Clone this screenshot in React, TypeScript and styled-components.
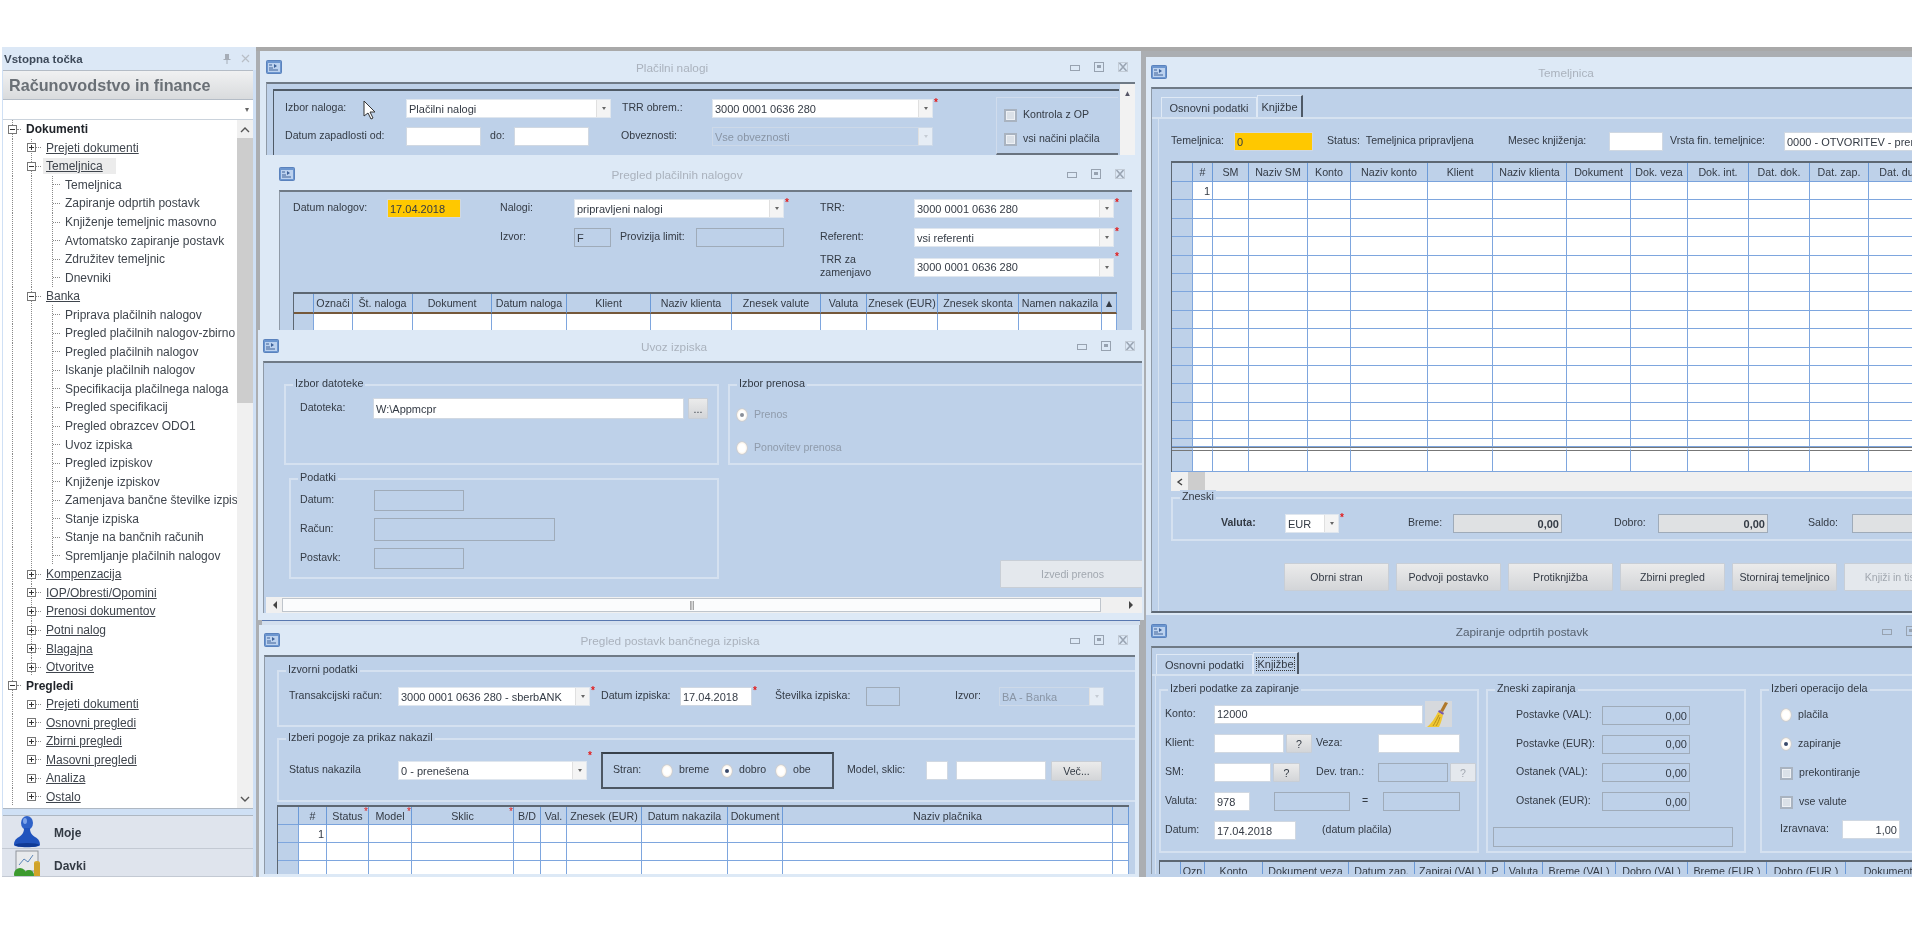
import React from 'react';
import styled, { createGlobalStyle } from 'styled-components';

const GlobalStyle = createGlobalStyle`
  html, body {
    margin: 0;
    padding: 0;
    background: #ffffff;
    overflow: hidden;
  }
  body {
    font-family: "Liberation Sans", Arial, sans-serif;
    font-size: 11px;
    color: #2a2f38;
  }
`;

const Page = styled.div`
  width: 1914px;
  height: 926px;
  padding: 47px 2px 0 2px;
  box-sizing: border-box;
  filter: blur(0.6px);
`;

const Screen = styled.div`
  display: flex;
  width: 1910px;
  height: 830px;
  overflow: hidden;
`;

/* ---------- left navigation ---------- */

const Nav = styled.aside`
  width: 254px;
  flex: none;
  display: flex;
  flex-direction: column;
  background: #cfe0f5;
  padding-right: 3px;
  box-sizing: border-box;
`;

const NavHead = styled.div`
  height: 23px;
  flex: none;
  display: flex;
  align-items: center;
  justify-content: space-between;
  padding: 0 6px 0 2px;
  background: #dce8f6;
  margin-right: -3px;
  font-size: 11.5px;
  font-weight: 700;
  color: #3e4a5a;
`;

const NavHeadIcons = styled.div`
  display: flex;
  align-items: center;
  gap: 10px;
`;

const NavTitle = styled.div`
  height: 28px;
  flex: none;
  display: flex;
  align-items: center;
  padding-left: 6px;
  font-size: 16.2px;
  font-weight: 700;
  color: #6a7076;
  background: linear-gradient(#f0f1f2, #d9dbdd);
  border-top: 1px solid #b4bcc6;
  border-bottom: 1px solid #b4bcc6;
  margin-left: 1px;
`;

const NavCombo = styled.div`
  height: 19px;
  flex: none;
  display: flex;
  justify-content: flex-end;
  align-items: center;
  background: #fff;
  margin-left: 1px;
  border-bottom: 1px solid #cbd3dc;
  padding-right: 4px;
  color: #666;
  font-size: 8px;
`;

const TreeBox = styled.div`
  flex: 1;
  display: flex;
  min-height: 0;
  background: #fff;
  margin-left: 1px;
`;

const Tree = styled.ul`
  flex: 1;
  list-style: none;
  margin: 0;
  padding: 0;
  min-width: 0;
  overflow: hidden;
`;

const dotted = 'repeating-linear-gradient(#8a8a8a 0 1px, transparent 1px 2px)';

const TreeRow = styled.li<{ $level: number; $sub?: boolean }>`
  height: 18.56px;
  display: flex;
  align-items: center;
  padding-left: ${(p) => (p.$level === 0 ? 5 : p.$level === 1 ? 24 : 50)}px;
  white-space: nowrap;
  font-size: 12px;
  color: #3a4048;
  background-image: ${dotted}, ${dotted}, ${dotted};
  background-repeat: no-repeat;
  background-size: 1px 100%;
  background-position:
    9px 0,
    ${(p) => (p.$sub ? '28px 0' : '-5px 0')},
    ${(p) => (p.$level === 2 ? '49px 0' : '-5px 0')};
`;

const TreeBoxIcon = styled.span`
  width: 9px;
  height: 9px;
  flex: none;
  border: 1px solid #777;
  box-sizing: border-box;
  position: relative;
  background: #fff;
  &::before {
    content: '';
    position: absolute;
    left: 1px;
    right: 1px;
    top: 3px;
    height: 1px;
    background: #333;
  }
`;

const TreePlus = styled(TreeBoxIcon)`
  &::after {
    content: '';
    position: absolute;
    left: 3px;
    top: 1px;
    bottom: 1px;
    width: 1px;
    background: #333;
  }
`;

const TreeDash = styled.span<{ $w: number }>`
  width: ${(p) => p.$w}px;
  flex: none;
  border-top: 1px dotted #888;
  margin-right: 2px;
`;

const TreeText = styled.span<{ $kind: 'root' | 'link' | 'leaf'; $active?: boolean }>`
  font-weight: ${(p) => (p.$kind === 'root' ? 700 : 400)};
  text-decoration: ${(p) => (p.$kind === 'link' ? 'underline' : 'none')};
  color: ${(p) => (p.$kind === 'root' ? '#20242a' : '#3f454d')};
  background: ${(p) => (p.$active ? '#ececec' : 'transparent')};
  padding: ${(p) => (p.$active ? '1px 13px 1px 3px' : '0 0 0 3px')};
`;

const TreeScroll = styled.div`
  width: 16px;
  flex: none;
  display: flex;
  flex-direction: column;
  align-items: center;
  background: #f0f0f0;
`;

const TreeThumb = styled.div`
  width: 16px;
  height: 265px;
  background: #cdcdcd;
`;

const TreeArrow = styled.div`
  height: 18px;
  flex: none;
  display: flex;
  align-items: center;
`;

const TreeGap = styled.div`
  flex: 1;
`;

const NavStrip = styled.div`
  height: 6px;
  flex: none;
  margin-left: 1px;
  background: #cfe0f5;
  border-top: 1px solid #aeb7c2;
  border-bottom: 1px solid #aeb7c2;
`;

const Shortcut = styled.div<{ $h: number }>`
  height: ${(p) => p.$h}px;
  flex: none;
  display: flex;
  align-items: flex-start;
  gap: 13px;
  padding-left: 11px;
  background: #dfe4ed;
  border-bottom: 1px solid #c3c9d3;
  font-size: 12px;
  font-weight: 700;
  line-height: 34px;
  color: #333a44;
  overflow: hidden;
`;

const ShortcutIcon = styled.svg`
  width: 28px;
  flex: none;
`;

/* ---------- MDI desktop ---------- */

const Desktop = styled.main`
  position: relative;
  flex: 1;
  background: #abaeb2;
  border-top: 4px solid #a9a9a9;
  box-sizing: border-box;
  overflow: hidden;
`;

const Window = styled.section<{
  $x: number;
  $y: number;
  $w: number;
  $h: number;
  $pl: number;
  $pr: number;
  $pb?: number;
  $focus?: boolean;
}>`
  position: absolute;
  left: ${(p) => p.$x}px;
  top: ${(p) => p.$y}px;
  width: ${(p) => p.$w}px;
  height: ${(p) => p.$h}px;
  display: flex;
  flex-direction: column;
  background: ${(p) => (p.$focus ? '#bed1e9' : '#dde9f6')};
  overflow: hidden;
  box-sizing: border-box;
  padding: 0 ${(p) => p.$pr}px ${(p) => p.$pb ?? 3}px ${(p) => p.$pl}px;
`;

const TitleBar = styled.header<{ $h: number; $cx: number; $focus?: boolean }>`
  height: ${(p) => p.$h}px;
  flex: none;
  display: flex;
  align-items: center;
  position: relative;
  color: ${(p) => (p.$focus ? '#55606e' : '#aab2bd')};
  font-size: 11.8px;
  h2 {
    position: absolute;
    left: ${(p) => p.$cx}px;
    transform: translateX(-50%);
    margin: 2px 0 0 0;
    font: inherit;
    white-space: nowrap;
  }
`;

const WinIcon = styled.svg`
  width: 16px;
  height: 14px;
  flex: none;
`;

const WinButtons = styled.div`
  margin-left: auto;
  margin-right: 7px;
  display: flex;
  align-items: center;
  gap: 14px;
`;

const WinBtn = styled.svg`
  width: 10px;
  height: 10px;
  flex: none;
`;

const Body = styled.div<{ $closed?: boolean }>`
  flex: 1;
  min-height: 0;
  background: #bed1e9;
  border-top: 2px solid #6f7a86;
  border-left: 1px solid #8f9aa7;
  border-bottom: ${(p) => (p.$closed ? '2px solid #5f6975' : '0')};
  overflow: hidden;
  position: relative;
  display: flex;
  flex-direction: column;
`;

const Stack = styled.div<{ $t?: number; $l?: number; $gap?: number }>`
  display: flex;
  flex-direction: column;
  gap: ${(p) => p.$gap ?? 0}px;
  padding-top: ${(p) => p.$t ?? 0}px;
  padding-left: ${(p) => p.$l ?? 0}px;
  flex: none;
`;

const Row = styled.div<{ $h?: number; $gap?: number; $mt?: number; $ml?: number; $top?: boolean }>`
  display: flex;
  align-items: ${(p) => (p.$top ? 'flex-start' : 'center')};
  height: ${(p) => (p.$h ? `${p.$h}px` : 'auto')};
  gap: ${(p) => p.$gap ?? 0}px;
  margin-top: ${(p) => p.$mt ?? 0}px;
  margin-left: ${(p) => p.$ml ?? 0}px;
  flex: none;
`;

const Label = styled.span<{ $w?: number; $ml?: number; $tone?: 'dis' | 'bold' }>`
  width: ${(p) => (p.$w ? `${p.$w}px` : 'auto')};
  margin-left: ${(p) => p.$ml ?? 0}px;
  padding-bottom: 2px;
  flex: none;
  white-space: nowrap;
  font-size: 10.6px;
  line-height: 13px;
  font-weight: ${(p) => (p.$tone === 'bold' ? 700 : 400)};
  color: ${(p) => (p.$tone === 'dis' ? '#8f9bab' : '#333a44')};
`;

const Field = styled.div<{
  $w: number;
  $h?: number;
  $ml?: number;
  $bg?: string;
  $right?: boolean;
  $bold?: boolean;
}>`
  width: ${(p) => p.$w}px;
  height: ${(p) => p.$h ?? 19}px;
  margin-left: ${(p) => p.$ml ?? 0}px;
  flex: none;
  box-sizing: border-box;
  display: flex;
  align-items: center;
  justify-content: ${(p) => (p.$right ? 'flex-end' : 'flex-start')};
  padding: 0 2px;
  background: ${(p) => p.$bg ?? '#ffffff'};
  border: 1px solid ${(p) => (p.$bg && p.$bg !== '#ffc800' ? '#9fabb9' : '#d0d8e2')};
  font-size: 11px;
  font-weight: ${(p) => (p.$bold ? 700 : 400)};
  color: #333a44;
  white-space: nowrap;
  overflow: hidden;
`;

const ComboBox = styled.div<{ $w: number; $ml?: number; $dis?: boolean }>`
  width: ${(p) => p.$w}px;
  height: 19px;
  margin-left: ${(p) => p.$ml ?? 0}px;
  flex: none;
  box-sizing: border-box;
  display: flex;
  align-items: center;
  justify-content: space-between;
  background: ${(p) => (p.$dis ? '#bed1e9' : '#ffffff')};
  border: 1px solid ${(p) => (p.$dis ? '#cdd9e8' : '#dfe6ee')};
  font-size: 11px;
  color: ${(p) => (p.$dis ? '#8995a5' : '#333a44')};
  padding-left: 2px;
  white-space: nowrap;
  overflow: hidden;
`;

const ComboArrow = styled.span<{ $dis?: boolean }>`
  width: 13px;
  height: 100%;
  flex: none;
  display: flex;
  align-items: center;
  justify-content: center;
  background: ${(p) => (p.$dis ? '#e6edf5' : '#f4f4f4')};
  border-left: 1px solid #e0e0e0;
  &::before {
    content: '';
    border-left: 2.5px solid transparent;
    border-right: 2.5px solid transparent;
    border-top: 3px solid ${(p) => (p.$dis ? '#c5ccd4' : '#666')};
  }
`;

const Star = styled.span`
  width: 4px;
  flex: none;
  align-self: flex-start;
  margin-left: 1px;
  color: #e21b1b;
  font-size: 10px;
  line-height: 8px;
  font-weight: 700;
`;

const GroupBox = styled.fieldset<{ $w: number; $h: number; $ml?: number; $mt?: number; $open?: boolean }>`
  width: ${(p) => p.$w}px;
  height: ${(p) => p.$h}px;
  margin: ${(p) => p.$mt ?? 0}px 0 0 ${(p) => p.$ml ?? 0}px;
  box-sizing: border-box;
  flex: none;
  padding: 0;
  border: 2px solid #d5e1f0;
  border-right-width: ${(p) => (p.$open ? 0 : 2)}px;
  position: relative;
  min-width: 0;
`;

const GroupLegend = styled.legend`
  position: absolute;
  top: -9px;
  left: 7px;
  padding: 0 2px;
  margin: 0;
  background: #bed1e9;
  font-size: 10.8px;
  line-height: 13px;
  color: #333a44;
  white-space: nowrap;
`;

const BtnBox = styled.div<{
  $w: number;
  $h?: number;
  $ml?: number;
  $mt?: number;
  $dis?: boolean;
}>`
  width: ${(p) => p.$w}px;
  height: ${(p) => p.$h ?? 19}px;
  margin: ${(p) => p.$mt ?? 0}px 0 0 ${(p) => p.$ml ?? 0}px;
  flex: none;
  box-sizing: border-box;
  display: flex;
  align-items: center;
  justify-content: center;
  background: ${(p) => (p.$dis ? '#e4e8ed' : 'linear-gradient(#ebebeb, #d3d5d8)')};
  border: 1px solid #c8ced6;
  border-radius: 1px;
  font-size: 10.6px;
  color: ${(p) => (p.$dis ? '#a2a8b0' : '#333a44')};
  white-space: nowrap;
  overflow: hidden;
`;

const Radio = styled.span<{ $on?: boolean; $ml?: number; $dis?: boolean }>`
  width: 12px;
  height: 14px;
  margin-left: ${(p) => p.$ml ?? 0}px;
  margin-right: 6px;
  flex: none;
  box-sizing: border-box;
  border-radius: 50%;
  background: radial-gradient(#ffffff 45%, #f8e3c6 100%);
  border: 1px solid #c9ced6;
  display: flex;
  align-items: center;
  justify-content: center;
  &::before {
    content: '';
    width: 4px;
    height: 4px;
    border-radius: 50%;
    background: ${(p) => (p.$on ? (p.$dis ? '#8a8f99' : '#3a4a6a') : 'transparent')};
  }
`;

const Check = styled.span`
  width: 13px;
  height: 13px;
  margin-right: 6px;
  flex: none;
  box-sizing: border-box;
  background: #dbe1e8;
  border: 2px solid #a9b3c0;
  box-shadow: inset 0 0 0 1px #eef1f5;
`;

const Side = styled.div<{ $w: number; $h: number; $ml: number; $mt: number }>`
  width: ${(p) => p.$w}px;
  height: ${(p) => p.$h}px;
  margin: ${(p) => p.$mt}px 0 0 ${(p) => p.$ml}px;
  flex: none;
  box-sizing: border-box;
  border-top: 1px solid #d0dced;
  border-left: 1px solid #d0dced;
  border-bottom: 2px solid #69737f;
  display: flex;
  flex-direction: column;
  padding: 10px 0 0 7px;
  gap: 9px;
`;

const RightScroll = styled.div`
  position: absolute;
  top: 0;
  right: 0;
  bottom: 0;
  width: 15px;
  background: #f2f2f2;
  display: flex;
  justify-content: center;
  padding-top: 5px;
  box-sizing: border-box;
  color: #556;
  font-size: 8px;
`;

const InnerFrame = styled.div<{ $ml: number; $mt: number; $mr: number }>`
  margin: ${(p) => p.$mt}px ${(p) => p.$mr}px 0 ${(p) => p.$ml}px;
  border-top: 2px solid #4f5a66;
  border-left: 1px solid #4f5a66;
  flex: 1;
  display: flex;
`;

const StranBox = styled.div`
  width: 233px;
  height: 37px;
  margin-left: 9px;
  flex: none;
  box-sizing: border-box;
  display: flex;
  align-items: center;
  padding-left: 10px;
  border: 2px solid #4d5763;
  border-top-color: #38414b;
`;

/* ---------- data grids ---------- */

const Table = styled.div<{ $cols: string; $rows: string; $w: number; $ml?: number; $mt?: number }>`
  display: grid;
  grid-template-columns: ${(p) => p.$cols};
  grid-template-rows: ${(p) => p.$rows};
  width: ${(p) => p.$w}px;
  margin: ${(p) => p.$mt ?? 0}px 0 0 ${(p) => p.$ml ?? 0}px;
  box-sizing: border-box;
  background: #fff;
  border-top: 2px solid #5d6772;
  border-left: 1px solid #5d6772;
  overflow: hidden;
  flex: none;
`;

const HeadCell = styled.div<{ $brown?: boolean }>`
  display: flex;
  align-items: center;
  justify-content: center;
  background: #bed1e9;
  border-right: 1px solid #6b9ad8;
  border-bottom: ${(p) => (p.$brown ? '2px solid #75583a' : '1px solid #7aa3dc')};
  font-size: 10.7px;
  color: #333a44;
  white-space: nowrap;
  overflow: hidden;
  position: relative;
  box-sizing: border-box;
`;

const HeadStar = styled.span`
  position: absolute;
  right: 0;
  top: 1px;
  color: #e21b1b;
  font-size: 10px;
  line-height: 8px;
`;

const DataCell = styled.div<{ $side?: boolean; $sep?: boolean }>`
  background: ${(p) => (p.$side ? '#bed1e9' : '#ffffff')};
  border-right: 1px solid #7ea6de;
  border-bottom: 1px solid #7ea6de;
  border-top: ${(p) => (p.$sep ? '4px double #777' : '0')};
  box-sizing: border-box;
  display: flex;
  align-items: center;
  justify-content: flex-end;
  padding-right: 2px;
  font-size: 11px;
  color: #333a44;
`;

const TabStrip = styled.div<{ $ml: number; $mt: number }>`
  display: flex;
  align-items: flex-end;
  height: 22px;
  margin: ${(p) => p.$mt}px 0 0 ${(p) => p.$ml}px;
  flex: none;
`;

const Tab = styled.div<{ $w: number; $active?: boolean; $focus?: boolean }>`
  width: ${(p) => p.$w}px;
  height: ${(p) => (p.$active ? 22 : 20)}px;
  box-sizing: border-box;
  display: flex;
  align-items: center;
  justify-content: center;
  border-top: 1px solid #dfe9f5;
  border-left: 1px solid #dfe9f5;
  border-right: ${(p) => (p.$active ? '2px solid #4e5966' : '1px solid #dfe9f5')};
  font-size: 11px;
  color: #333a44;
  span {
    outline: ${(p) => (p.$focus ? '1px dotted #3a3a3a' : 'none')};
  }
`;

const TabPage = styled.div<{ $edge: number }>`
  border-top: 2px solid #d6e2f0;
  flex: 1;
  min-height: 0;
  display: flex;
  flex-direction: column;
  position: relative;
  &::before {
    content: '';
    position: absolute;
    left: ${(p) => p.$edge}px;
    top: 0;
    bottom: 0;
    width: 1px;
    background: #d6e2f0;
  }
`;

const HScroll = styled.div<{ $w: number; $h: number; $ml: number; $mt?: number }>`
  width: ${(p) => p.$w}px;
  height: ${(p) => p.$h}px;
  margin: ${(p) => p.$mt ?? 0}px 0 0 ${(p) => p.$ml}px;
  flex: none;
  background: #f0f0f0;
  display: flex;
  align-items: center;
  color: #555;
`;

const Thumb = styled.div`
  width: 17px;
  height: 100%;
  margin-left: 4px;
  background: #cdcdcd;
`;

const ThumbBar = styled.div`
  width: 819px;
  height: 14px;
  margin-left: 3px;
  background: #fbfcfd;
  border: 1px solid #bfc5cc;
  box-sizing: border-box;
  display: flex;
  align-items: center;
  justify-content: center;
  color: #888;
  font-size: 9px;
  letter-spacing: -1px;
`;

const Caret = styled.svg<{ $ml: number }>`
  width: 8px;
  height: 8px;
  margin-left: ${(p) => p.$ml}px;
  flex: none;
`;

const Cursor = styled.svg`
  position: absolute;
  left: 96px;
  top: 16px;
  width: 14px;
  height: 20px;
  z-index: 2;
`;

const HiddenEdge = styled.div`
  position: absolute;
  left: 6px;
  top: 569px;
  width: 878px;
  height: 5px;
  background: #d3dfee;
  border-top: 1px solid #5878b0;
  box-sizing: border-box;
`;

const BroomIcon = styled.svg`
  width: 27px;
  height: 26px;
  margin-left: 2px;
  flex: none;
`;

/* ---------- small drawings ---------- */

const AppIcon = () => (
  <WinIcon viewBox="0 0 16 14">
    <rect x="0.5" y="0.5" width="15" height="13" rx="1" fill="#6c96cf" stroke="#5a82bd" />
    <rect x="2" y="3" width="12" height="9" fill="#bcd2ef" />
    <path d="M3 5h3M3 8h4M3 10h9" stroke="#3e6299" strokeWidth="1" />
    <path d="M8 4l3 2-3 2z" fill="#3e6299" />
  </WinIcon>
);

const Controls = () => (
  <WinButtons>
    <WinBtn viewBox="0 0 10 10">
      <rect x="0.5" y="3.5" width="9" height="5" fill="none" stroke="#97a2b0" />
    </WinBtn>
    <WinBtn viewBox="0 0 10 10">
      <rect x="0.5" y="0.5" width="9" height="9" fill="none" stroke="#97a2b0" />
      <rect x="3" y="3" width="4" height="3" fill="#97a2b0" />
    </WinBtn>
    <WinBtn viewBox="0 0 10 10">
      <path d="M1.5 1l7 8M8.5 1l-7 8" stroke="#9aa5b3" strokeWidth="1.6" fill="none" />
      <rect x="0.5" y="0.5" width="9" height="9" fill="none" stroke="#c3ccd7" />
    </WinBtn>
  </WinButtons>
);

const Title = ({ text, h, cx, focus }: { text: string; h: number; cx: number; focus?: boolean }) => (
  <TitleBar $h={h} $cx={cx} $focus={focus}>
    <AppIcon />
    <h2>{text}</h2>
    <Controls />
  </TitleBar>
);

const Combo = ({ w, ml, dis, children }: { w: number; ml?: number; dis?: boolean; children?: React.ReactNode }) => (
  <ComboBox $w={w} $ml={ml} $dis={dis}>
    {children}
    <ComboArrow $dis={dis} />
  </ComboBox>
);

const Broom = () => (
  <BroomIcon viewBox="0 0 27 26">
    <rect x="0" y="0" width="27" height="26" fill="#d6d9dd" />
    <path d="M20 1l3 1-5 9-3-1z" fill="#b0782a" />
    <path d="M14 9l5 3-1 2-5-3z" fill="#7b5aa6" />
    <path d="M13 11l5 3c-1 4-2 8-4 12H2c4-3 8-9 11-15z" fill="#efc733" />
    <path d="M8 25c2-3 4-7 6-11M11 25c2-3 3-6 4-9" stroke="#b8901c" fill="none" />
  </BroomIcon>
);

const Person = () => (
  <ShortcutIcon height="32" viewBox="0 0 28 32">
    <ellipse cx="14" cy="7" rx="6" ry="7" fill="#2f62c8" />
    <path d="M11 12h6c0 4 1 6 5 9 4 2 5 5 5 8 0 3-26 3-26 0 0-3 1-6 5-8 4-3 5-5 5-9z" fill="#2053bd" />
    <ellipse cx="12" cy="5" rx="2" ry="3" fill="#7da3ea" />
    <ellipse cx="14" cy="29" rx="12" ry="2" fill="#103a95" />
  </ShortcutIcon>
);

const Chart = () => (
  <ShortcutIcon height="27" viewBox="0 0 28 27">
    <rect x="3" y="2" width="22" height="20" fill="#e8eaec" stroke="#8f949b" />
    <path d="M6 16l5-6 4 3 5-7" stroke="#5b85b8" fill="none" />
    <ellipse cx="24" cy="14" rx="3" ry="2" fill="#d6aa2c" />
    <rect x="21" y="14" width="6" height="13" fill="#d0a32a" />
    <circle cx="7" cy="25" r="6" fill="#3c9a2e" />
    <circle cx="16" cy="26" r="5" fill="#3c9a2e" />
  </ShortcutIcon>
);

/* ---------- data ---------- */

type TreeItem = { level: number; text: string; open?: boolean; active?: boolean };

const treeItems: TreeItem[] = [
  { level: 0, text: 'Dokumenti', open: true },
  { level: 1, text: 'Prejeti dokumenti' },
  { level: 1, text: 'Temeljnica', open: true, active: true },
  { level: 2, text: 'Temeljnica' },
  { level: 2, text: 'Zapiranje odprtih postavk' },
  { level: 2, text: 'Knjiženje temeljnic masovno' },
  { level: 2, text: 'Avtomatsko zapiranje postavk' },
  { level: 2, text: 'Združitev temeljnic' },
  { level: 2, text: 'Dnevniki' },
  { level: 1, text: 'Banka', open: true },
  { level: 2, text: 'Priprava plačilnih nalogov' },
  { level: 2, text: 'Pregled plačilnih nalogov-zbirno' },
  { level: 2, text: 'Pregled plačilnih nalogov' },
  { level: 2, text: 'Iskanje plačilnih nalogov' },
  { level: 2, text: 'Specifikacija plačilnega naloga' },
  { level: 2, text: 'Pregled specifikacij' },
  { level: 2, text: 'Pregled obrazcev ODO1' },
  { level: 2, text: 'Uvoz izpiska' },
  { level: 2, text: 'Pregled izpiskov' },
  { level: 2, text: 'Knjiženje izpiskov' },
  { level: 2, text: 'Zamenjava bančne številke izpisk' },
  { level: 2, text: 'Stanje izpiska' },
  { level: 2, text: 'Stanje na bančnih računih' },
  { level: 2, text: 'Spremljanje plačilnih nalogov' },
  { level: 1, text: 'Kompenzacija' },
  { level: 1, text: 'IOP/Obresti/Opomini' },
  { level: 1, text: 'Prenosi dokumentov' },
  { level: 1, text: 'Potni nalog' },
  { level: 1, text: 'Blagajna' },
  { level: 1, text: 'Otvoritve' },
  { level: 0, text: 'Pregledi', open: true },
  { level: 1, text: 'Prejeti dokumenti' },
  { level: 1, text: 'Osnovni pregledi' },
  { level: 1, text: 'Zbirni pregledi' },
  { level: 1, text: 'Masovni pregledi' },
  { level: 1, text: 'Analiza' },
  { level: 1, text: 'Ostalo' },
];

const toCols = (edges: number[]) =>
  edges
    .slice(1)
    .map((e, i) => `${e - edges[i]}px`)
    .join(' ');

type GridSpec = {
  edges: number[];
  heads: string[];
  rowTpl: string;
  rows: number;
  first?: boolean;
  stars?: string[];
  brown?: boolean;
  sepLast?: boolean;
  scroll?: boolean;
};

const DataGrid = ({ spec, ml, mt }: { spec: GridSpec; ml?: number; mt?: number }) => (
  <Table
    $cols={toCols(spec.edges)}
    $rows={spec.rowTpl}
    $w={spec.edges[spec.edges.length - 1] - spec.edges[0] + 1}
    $ml={ml}
    $mt={mt}
  >
    {spec.heads.map((h, i) => (
      <HeadCell key={i} $brown={spec.brown}>
        {h}
        {spec.stars?.includes(h) && <HeadStar>*</HeadStar>}
      </HeadCell>
    ))}
    {Array.from({ length: spec.rows }).flatMap((_, r) =>
      spec.heads.map((_h, c) => (
        <DataCell
          key={`${r}-${c}`}
          $side={c === 0}
          $sep={spec.sepLast && r === spec.rows - 1}
        >
          {spec.first && r === 0 && c === 1 ? '1' : ''}
        </DataCell>
      )),
    )}
  </Table>
);

const payOrdersGrid: GridSpec = {
  edges: [293, 313, 352, 412, 491, 566, 650, 731, 820, 866, 937, 1018, 1101, 1116],
  heads: ['', 'Označi', 'Št. naloga', 'Dokument', 'Datum naloga', 'Klient', 'Naziv klienta', 'Znesek valute', 'Valuta', 'Znesek (EUR)', 'Znesek skonta', 'Namen nakazila', '▲'],
  rowTpl: '20px 18px',
  rows: 1,
  brown: true,
};

const statementGrid: GridSpec = {
  edges: [277, 298, 326, 368, 411, 513, 540, 566, 641, 727, 782, 1112, 1128],
  heads: ['', '#', 'Status', 'Model', 'Sklic', 'B/D', 'Val.', 'Znesek (EUR)', 'Datum nakazila', 'Dokument', 'Naziv plačnika', ' '],
  rowTpl: 'repeat(4, 18px)',
  rows: 3,
  first: true,
  stars: ['Status', 'Model', 'Sklic'],
};

const journalGrid: GridSpec = {
  edges: [1171, 1192, 1212, 1248, 1307, 1350, 1427, 1492, 1566, 1630, 1687, 1748, 1809, 1868, 1930],
  heads: ['', '#', 'SM', 'Naziv SM', 'Konto', 'Naziv konto', 'Klient', 'Naziv klienta', 'Dokument', 'Dok. veza', 'Dok. int.', 'Dat. dok.', 'Dat. zap.', 'Dat. dur.'],
  rowTpl: '19px repeat(14, 18.4px) 8px 25px',
  rows: 16,
  first: true,
  sepLast: true,
};

const closingGrid: GridSpec = {
  edges: [1159, 1180, 1204, 1262, 1348, 1414, 1485, 1504, 1542, 1615, 1687, 1766, 1845, 1930],
  heads: ['', 'Ozn', 'Konto', 'Dokument veza', 'Datum zap.', 'Zapiraj (VAL)', 'P', 'Valuta', 'Breme (VAL)', 'Dobro (VAL)', 'Breme (EUR )', 'Dobro (EUR )', 'Dokument'],
  rowTpl: '18px 18px',
  rows: 1,
};

/* ---------- windows ---------- */

const PayOrdersWindow = () => (
  <Window $x={4} $y={0} $w={881} $h={107} $pl={6} $pr={6}>
    <Title text="Plačilni nalogi" h={31} cx={406} />
    <Body>
      <Cursor viewBox="0 0 14 20">
        <path d="M1 1v15l4-3 3 6 2-1-3-6h5z" fill="#fff" stroke="#333" strokeWidth="1" />
      </Cursor>
      <InnerFrame $ml={6} $mt={5} $mr={16}>
        <Stack $t={8}>
          <Row $h={19}>
            <Label $w={121} $ml={11}>Izbor naloga:</Label>
            <Combo w={205}>Plačilni nalogi</Combo>
            <Label $w={90} $ml={11}>TRR obrem.:</Label>
            <Combo w={221}>3000 0001 0636 280</Combo>
            <Star>*</Star>
          </Row>
          <Row $h={19} $mt={9}>
            <Label $w={121} $ml={11}>Datum zapadlosti od:</Label>
            <Field $w={75} />
            <Label $w={24} $ml={9}>do:</Label>
            <Field $w={75} />
            <Label $w={91} $ml={32}>Obveznosti:</Label>
            <Combo w={221} dis>Vse obveznosti</Combo>
          </Row>
          <Row $h={19} $mt={10} $ml={132}>
            <Field $w={75} />
            <BtnBox $w={14} $ml={1} />
          </Row>
        </Stack>
        <Side $w={122} $h={58} $ml={58} $mt={6}>
          <Row>
            <Check />
            <Label>Kontrola z OP</Label>
          </Row>
          <Row>
            <Check />
            <Label>vsi načini plačila</Label>
          </Row>
        </Side>
      </InnerFrame>
      <RightScroll>▲</RightScroll>
    </Body>
  </Window>
);

const ReviewWindow = () => (
  <Window $x={4} $y={107} $w={881} $h={180} $pl={19} $pr={9}>
    <Title text="Pregled plačilnih nalogov" h={32} cx={398} />
    <Body>
      <Stack $l={13} $t={7}>
        <Row $h={19}>
          <Label $w={94}>Datum nalogov:</Label>
          <Field $w={74} $bg="#ffc800">17.04.2018</Field>
          <Label $w={74} $ml={39}>Nalogi:</Label>
          <Combo w={210}>pripravljeni nalogi</Combo>
          <Star>*</Star>
          <Label $w={94} $ml={31}>TRR:</Label>
          <Combo w={200}>3000 0001 0636 280</Combo>
          <Star>*</Star>
        </Row>
        <Row $h={19} $mt={10}>
          <Label $w={74} $ml={207}>Izvor:</Label>
          <Field $w={37} $bg="#bed1e9">F</Field>
          <Label $w={76} $ml={9}>Provizija limit:</Label>
          <Field $w={88} $bg="#bed1e9" />
          <Label $w={94} $ml={36}>Referent:</Label>
          <Combo w={200}>vsi referenti</Combo>
          <Star>*</Star>
        </Row>
        <Row $h={28} $mt={6}>
          <Label $w={94} $ml={527}>TRR za<br />zamenjavo</Label>
          <Combo w={200}>3000 0001 0636 280</Combo>
          <Star>*</Star>
        </Row>
      </Stack>
      <DataGrid spec={payOrdersGrid} ml={13} mt={11} />
    </Body>
  </Window>
);

const ImportWindow = () => (
  <Window $x={2} $y={279} $w={886} $h={290} $pl={5} $pr={2} $pb={7}>
    <Title text="Uvoz izpiska" h={31} cx={411} />
    <Body>
      <Row $mt={21} $ml={20} $top>
        <GroupBox $w={435} $h={81}>
          <GroupLegend>Izbor datoteke</GroupLegend>
          <Row $mt={12} $ml={14}>
            <Label $w={73}>Datoteka:</Label>
            <Field $w={311} $h={21}>W:\Appmcpr</Field>
            <BtnBox $w={20} $h={21} $ml={4}>...</BtnBox>
          </Row>
        </GroupBox>
        <GroupBox $w={414} $h={81} $ml={9} $open>
          <GroupLegend>Izbor prenosa</GroupLegend>
          <Row $h={14} $mt={22} $ml={6}>
            <Radio $on $dis />
            <Label $tone="dis">Prenos</Label>
          </Row>
          <Row $h={14} $mt={19} $ml={6}>
            <Radio />
            <Label $tone="dis">Ponovitev prenosa</Label>
          </Row>
        </GroupBox>
      </Row>
      <Row $top>
        <GroupBox $w={430} $h={101} $ml={25} $mt={13}>
          <GroupLegend>Podatki</GroupLegend>
          <Stack $t={10} $l={9} $gap={7}>
            <Row>
              <Label $w={74}>Datum:</Label>
              <Field $w={90} $h={21} $bg="#bed1e9" />
            </Row>
            <Row>
              <Label $w={74}>Račun:</Label>
              <Field $w={181} $h={23} $bg="#bed1e9" />
            </Row>
            <Row>
              <Label $w={74}>Postavk:</Label>
              <Field $w={90} $h={21} $bg="#bed1e9" />
            </Row>
          </Stack>
        </GroupBox>
        <BtnBox $w={145} $h={28} $ml={281} $mt={95} $dis>Izvedi prenos</BtnBox>
      </Row>
      <HScroll $w={876} $h={16} $ml={2} $mt={9}>
        <Caret $ml={5} viewBox="0 0 8 8"><path d="M6 0v8L2 4z" fill="#444" /></Caret>
        <ThumbBar>|||</ThumbBar>
        <Caret $ml={26} viewBox="0 0 8 8"><path d="M2 0v8l4-4z" fill="#444" /></Caret>
      </HScroll>
    </Body>
  </Window>
);

const StatementWindow = () => (
  <Window $x={3} $y={574} $w={880} $h={252} $pl={5} $pr={4}>
    <Title text="Pregled postavk bančnega izpiska" h={30} cx={406} />
    <Body>
      <GroupBox $w={858} $h={57} $ml={12} $mt={13} $open>
        <GroupLegend>Izvorni podatki</GroupLegend>
        <Row $h={19} $mt={15} $ml={10}>
          <Label $w={109}>Transakcijski račun:</Label>
          <Combo w={192}>3000 0001 0636 280 - sberbANK</Combo>
          <Star>*</Star>
          <Label $w={79} $ml={6}>Datum izpiska:</Label>
          <Field $w={72}>17.04.2018</Field>
          <Star>*</Star>
          <Label $w={91} $ml={18}>Številka izpiska:</Label>
          <Field $w={34} $bg="#bed1e9" />
          <Label $w={44} $ml={55}>Izvor:</Label>
          <Combo w={105} dis>BA - Banka</Combo>
        </Row>
      </GroupBox>
      <GroupBox $w={858} $h={64} $ml={12} $mt={11} $open>
        <GroupLegend>Izberi pogoje za prikaz nakazil</GroupLegend>
        <Row $h={37} $mt={12} $ml={10}>
          <Label $w={109}>Status nakazila</Label>
          <Combo w={189}>0 - prenešena</Combo>
          <Star>*</Star>
          <StranBox>
            <Label $w={42}>Stran:</Label>
            <Radio $ml={6} />
            <Label $w={36}>breme</Label>
            <Radio $ml={6} $on />
            <Label $w={36}>dobro</Label>
            <Radio />
            <Label>obe</Label>
          </StranBox>
          <Label $w={79} $ml={13}>Model, sklic:</Label>
          <Field $w={22} />
          <Field $w={90} $ml={8} />
          <BtnBox $w={51} $h={20} $ml={5}>Več...</BtnBox>
        </Row>
      </GroupBox>
      <DataGrid spec={statementGrid} ml={12} mt={3} />
    </Body>
  </Window>
);

const JournalWindow = () => (
  <Window $x={890} $y={6} $w={1000} $h={558} $pl={5} $pr={5} $pb={2}>
    <Title text="Temeljnica" h={30} cx={415} />
    <Body $closed>
      <TabStrip $ml={9} $mt={6}>
        <Tab $w={96}><span>Osnovni podatki</span></Tab>
        <Tab $w={46} $active><span>Knjižbe</span></Tab>
      </TabStrip>
      <TabPage $edge={6}>
        <Row $h={19} $mt={13} $ml={19}>
          <Label $w={63}>Temeljnica:</Label>
          <Field $w={79} $bg="#ffc800">0</Field>
          <Label $w={181} $ml={14}>Status:&nbsp;&nbsp;Temeljnica pripravljena</Label>
          <Label $w={101}>Mesec knjiženja:</Label>
          <Field $w={54} />
          <Label $w={114} $ml={7}>Vrsta fin. temeljnice:</Label>
          <Field $w={130}>0000 - OTVORITEV - prenos</Field>
        </Row>
        <DataGrid spec={journalGrid} ml={19} mt={10} />
        <HScroll $w={760} $h={19} $ml={19}>
          <Caret $ml={5} viewBox="0 0 8 8"><path d="M6 1L2 4l4 3" fill="none" stroke="#444" strokeWidth="1.4" /></Caret>
          <Thumb />
        </HScroll>
        <GroupBox $w={760} $h={44} $ml={19} $mt={6} $open>
          <GroupLegend>Zneski</GroupLegend>
          <Row $h={19} $mt={15} $ml={48}>
            <Label $w={64} $tone="bold">Valuta:</Label>
            <Combo w={54}>EUR</Combo>
            <Star>*</Star>
            <Label $w={45} $ml={64}>Breme:</Label>
            <Field $w={109} $bg="#dfe1e3" $right $bold>0,00</Field>
            <Label $w={44} $ml={52}>Dobro:</Label>
            <Field $w={110} $bg="#dfe1e3" $right $bold>0,00</Field>
            <Label $w={44} $ml={40}>Saldo:</Label>
            <Field $w={80} $bg="#dfe1e3" />
          </Row>
        </GroupBox>
        <Row $mt={22} $ml={132} $gap={7}>
          <BtnBox $w={105} $h={28}>Obrni stran</BtnBox>
          <BtnBox $w={105} $h={28}>Podvoji postavko</BtnBox>
          <BtnBox $w={105} $h={28}>Protiknjižba</BtnBox>
          <BtnBox $w={105} $h={28}>Zbirni pregled</BtnBox>
          <BtnBox $w={105} $h={28}>Storniraj temeljnico</BtnBox>
          <BtnBox $w={105} $h={28} $dis>Knjiži in tiskaj</BtnBox>
        </Row>
      </TabPage>
    </Body>
  </Window>
);

const amountRows = ['Postavke (VAL):', 'Postavke (EUR):', 'Ostanek (VAL):', 'Ostanek (EUR):'];

const ClosingWindow = () => (
  <Window $x={890} $y={564} $w={801} $h={262} $pl={5} $pr={0} $focus>
    <Title text="Zapiranje odprtih postavk" h={31} cx={371} focus />
    <Body>
      <TabStrip $ml={4} $mt={4}>
        <Tab $w={97}><span>Osnovni podatki</span></Tab>
        <Tab $w={46} $active $focus><span>Knjižbe</span></Tab>
      </TabStrip>
      <TabPage $edge={3}>
        <Row $mt={13} $ml={7} $top>
          <GroupBox $w={320} $h={164}>
            <GroupLegend>Izberi podatke za zapiranje</GroupLegend>
            <Row $h={26} $mt={10} $ml={4}>
              <Label $w={49}>Konto:</Label>
              <Field $w={209}>12000</Field>
              <Broom />
            </Row>
            <Row $h={19} $mt={7} $ml={4}>
              <Label $w={49}>Klient:</Label>
              <Field $w={70} />
              <BtnBox $w={26} $ml={2}>?</BtnBox>
              <Label $w={62} $ml={4}>Veza:</Label>
              <Field $w={82} />
            </Row>
            <Row $h={19} $mt={10} $ml={4}>
              <Label $w={49}>SM:</Label>
              <Field $w={57} />
              <BtnBox $w={27} $ml={2}>?</BtnBox>
              <Label $w={62} $ml={16}>Dev. tran.:</Label>
              <Field $w={70} $bg="#bed1e9" />
              <BtnBox $w={26} $ml={2} $dis>?</BtnBox>
            </Row>
            <Row $h={19} $mt={10} $ml={4}>
              <Label $w={49}>Valuta:</Label>
              <Field $w={36}>978</Field>
              <Field $w={76} $ml={24} $bg="#bed1e9" />
              <Label $w={21} $ml={12}>=</Label>
              <Field $w={77} $bg="#bed1e9" />
            </Row>
            <Row $h={19} $mt={10} $ml={4}>
              <Label $w={49}>Datum:</Label>
              <Field $w={82}>17.04.2018</Field>
              <Label $ml={26}>(datum plačila)</Label>
            </Row>
          </GroupBox>
          <GroupBox $w={260} $h={164} $ml={7}>
            <GroupLegend>Zneski zapiranja</GroupLegend>
            <Stack $t={15} $l={28} $gap={9.7}>
              {amountRows.map((r) => (
                <Row $h={19} key={r}>
                  <Label $w={86}>{r}</Label>
                  <Field $w={88} $bg="#bed1e9" $right>0,00</Field>
                </Row>
              ))}
            </Stack>
            <Row $ml={5} $mt={16}>
              <Field $w={240} $h={20} $bg="#bed1e9" />
            </Row>
          </GroupBox>
          <GroupBox $w={170} $h={164} $ml={14} $open>
            <GroupLegend>Izberi operacijo dela</GroupLegend>
            <Stack $t={17} $l={18} $gap={15}>
              <Row $h={14}><Radio /><Label>plačila</Label></Row>
              <Row $h={14}><Radio $on /><Label>zapiranje</Label></Row>
              <Row $h={14}><Check /><Label>prekontiranje</Label></Row>
              <Row $h={14}><Check /><Label>vse valute</Label></Row>
            </Stack>
            <Row $h={19} $ml={18} $mt={11}>
              <Label $w={62}>Izravnava:</Label>
              <Field $w={58} $right>1,00</Field>
            </Row>
          </GroupBox>
        </Row>
        <DataGrid spec={closingGrid} ml={7} mt={7} />
      </TabPage>
    </Body>
  </Window>
);

export default function App() {
  return (
    <Page>
      <GlobalStyle />
      <Screen>
        <Nav>
          <NavHead>
            <span>Vstopna točka</span>
            <NavHeadIcons>
              <svg width="8" height="10" viewBox="0 0 8 10">
                <path d="M2 0h4v5h1.5v1h-3v4h-1V6h-3V5H2z" fill="#a6adb7" />
              </svg>
              <svg width="9" height="9" viewBox="0 0 9 9">
                <path d="M1 1l7 7M8 1L1 8" stroke="#b8bec6" strokeWidth="1.2" />
              </svg>
            </NavHeadIcons>
          </NavHead>
          <NavTitle>Računovodstvo in finance</NavTitle>
          <NavCombo>▾</NavCombo>
          <TreeBox>
            <Tree>
              {treeItems.map((t, i) => (
                <TreeRow
                  key={i}
                  $level={t.level}
                  $sub={t.level > 0 && i > 0 && i < 30}
                >
                  {t.level === 2 ? (
                    <TreeDash $w={7} />
                  ) : t.open ? (
                    <TreeBoxIcon />
                  ) : (
                    <TreePlus />
                  )}
                  {t.level !== 2 && <TreeDash $w={t.level === 0 ? 4 : 5} />}
                  <TreeText
                    $kind={t.level === 0 ? 'root' : t.level === 1 ? 'link' : 'leaf'}
                    $active={t.active}
                  >
                    {t.text}
                  </TreeText>
                </TreeRow>
              ))}
            </Tree>
            <TreeScroll>
              <TreeArrow>
                <svg width="10" height="7" viewBox="0 0 10 7"><path d="M1 6l4-4 4 4" fill="none" stroke="#555" strokeWidth="1.4" /></svg>
              </TreeArrow>
              <TreeThumb />
              <TreeGap />
              <TreeArrow>
                <svg width="10" height="7" viewBox="0 0 10 7"><path d="M1 1l4 4 4-4" fill="none" stroke="#555" strokeWidth="1.4" /></svg>
              </TreeArrow>
            </TreeScroll>
          </TreeBox>
          <NavStrip />
          <Shortcut $h={32}>
            <Person />
            <span>Moje</span>
          </Shortcut>
          <Shortcut $h={27}>
            <Chart />
            <span>Davki</span>
          </Shortcut>
        </Nav>
        <Desktop>
          <PayOrdersWindow />
          <ReviewWindow />
          <HiddenEdge />
          <ImportWindow />
          <StatementWindow />
          <JournalWindow />
          <ClosingWindow />
        </Desktop>
      </Screen>
    </Page>
  );
}
